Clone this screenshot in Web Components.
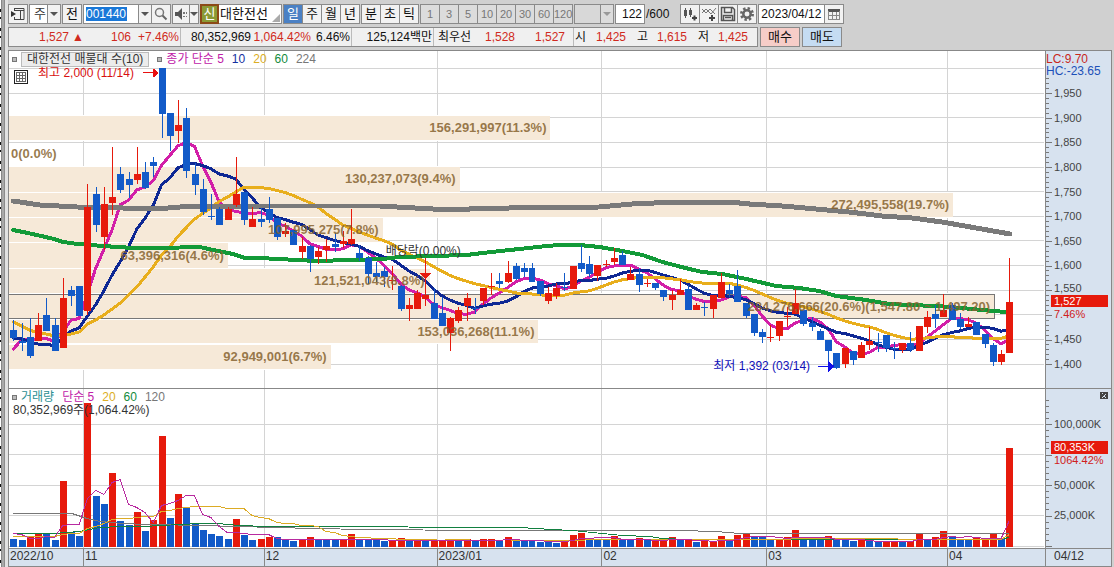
<!DOCTYPE html>
<html lang="ko">
<head>
<meta charset="utf-8">
<title>대한전선 차트</title>
<style>
html,body{margin:0;height:100%}
body{font:12px/16px "Liberation Sans","Noto Sans CJK KR",sans-serif;color:#111;background:#d0d0d0;display:flex}
hts-app{flex:1}
</style>
</head>
<body>
<hts-app></hts-app>
<script>
const define=(name,html,Base=HTMLElement)=>{
  const t=document.createElement('template');t.innerHTML=html;
  customElements.define(name,class extends Base{
    constructor(){super();this.attachShadow({mode:'open'}).append(t.content.cloneNode(true));}
  });
};

define('drop-down',`<style>
:host{display:flex;position:relative;height:20px}
::slotted(select){appearance:none;flex:1;min-width:0;height:20px;box-sizing:border-box;border:1px solid #8a8a8a;border-radius:0;margin:0;padding:0 0 0 4px;font:inherit;font-size:13px;color:#333;background:#fff}
:host([off]) ::slotted(select){background:#d8d8d8}
span{position:absolute;right:0;top:0;width:14px;height:20px;box-sizing:border-box;border:1px solid #8a8a8a;background:#f2f2f2;display:grid;place-items:center;pointer-events:none}
:host([off]) span{background:#dcdcdc;--c:#999}
i{border:4px solid transparent;border-top:4px solid var(--c,#555);border-bottom:0}
</style><slot></slot><span><i></i></span>`);

define('tool-bar',`<style>
:host{display:flex;height:20px;gap:1px}
*{box-sizing:border-box}
button,input{font:inherit;margin:0;padding:0;border:1px solid #8a8a8a;border-radius:0;height:20px;color:#111}
button{width:20px;font-size:13px;line-height:16px;background:#f2f2f2;display:grid;place-items:center;white-space:nowrap}
button svg{display:block}
.g{display:flex}
.g button+button{margin-left:-1px}
.n button{background:#dcdcdc;color:#777;font-size:11px}
.arrow{width:14px}
.arrow i{border:4px solid transparent;border-top:4px solid #555;border-bottom:0}
.codebox{width:56px;height:20px;border:1px solid #8a8a8a;background:#fff;padding:2px 2px;display:flex}
.codebox input{border:0;width:41px;height:14px;background:#1a78d8;color:#fff}
.name{width:82px;height:20px;background:#fff;border:1px solid #8a8a8a;display:flex;align-items:center;position:relative;font-size:13px}
.name b{width:19px;height:20px;margin:-1px 0 -1px -1px;border:2px solid #8c4a17;background:#8b9a35;color:#fff;font-weight:400;line-height:15px;text-align:center}
.name input{border:0;width:56px;height:16px;padding-left:1px}
.name:after{content:"";position:absolute;right:1px;bottom:1px;border:4px solid transparent;border-right-color:#aaa;border-bottom-color:#aaa}
button.on{background:#4a80c4;color:#fff}
label{display:flex;align-items:center;font-size:12px;gap:1px}
.count{width:30px;text-align:right;padding-right:2px;background:#fff}
.date{width:67px;padding-left:2px;background:#fff}
.icons{margin-left:10px}
</style>
<button aria-label="패널"><svg width="16" height="14"><path d="M4 1.5h10v11H4M4.5 1v3M4.5 10v3M4 3.5h10M10.500 4v8" fill="none" stroke="#444"/><path d="M1 4v6l5-3z" fill="#333"/></svg></button>
<drop-down style="width:32px"><select aria-label="시장"><option>주</option></select></drop-down>
<button>전</button>
<div class="g"><span class="codebox"><input value="001440" aria-label="종목코드"></span><button class="arrow" style="margin-left:-1px" aria-label="종목 목록"><i></i></button><button aria-label="검색"><svg width="14" height="14"><circle cx="5.500" cy="5.500" r="4" fill="none" stroke="#777" stroke-width="1.500"/><path d="M8.500 8.500l4 4" stroke="#666" stroke-width="2"/></svg></button></div>
<div class="g"><button style="width:18px" aria-label="소리"><svg width="14" height="12"><path d="M1 4h3l4-4v12l-4-4h-3z" fill="#555"/><path d="M9 4h2v2H9zM12 4h1v2h-1zM9 8h2v1H9zM12 8h1v1h-1z" fill="#777"/></svg></button><button class="arrow" style="width:10px" aria-label="소리 설정"><i></i></button></div>
<div class="name"><b>신</b><input value="대한전선" aria-label="종목명"></div>
<div class="g"><button class="on">일</button><button>주</button><button>월</button><button>년</button></div>
<div class="g"><button>분</button><button>초</button><button>틱</button></div>
<div class="g n"><button>1</button><button>3</button><button>5</button><button>10</button><button>20</button><button>30</button><button>60</button><button>120</button></div>
<drop-down off style="width:40px"><select aria-label="틱 간격"><option></option></select></drop-down>
<label><input class="count" value="122" aria-label="봉 개수">/600</label>
<div class="g icons">
<button aria-label="봉 추가"><svg width="16" height="16"><path d="M2 4h3v6H2zM7 4h3v5H7zM3 2h1v10H3zM8 2h1v9H8z" fill="#555"/><path d="M10 12h5M12.500 9.500v5" stroke="#444" stroke-width="2"/></svg></button>
<button aria-label="지표 추가"><svg width="16" height="16"><path d="M1 7l4-4 5 5 5-6M1 3l4 4 4-4 5 5" fill="none" stroke="#777"/><path d="M8 12h6M11 9v6" stroke="#444" stroke-width="2"/></svg></button>
<button aria-label="저장"><svg width="16" height="16"><path d="M1.500 1.500h11l2 2v11h-13zM4.500 1.500v5h7v-5M3.500 14.500v-5h9v5M5 11.500h6" fill="none" stroke="#555" stroke-width="1.500"/></svg></button>
<button aria-label="설정"><svg width="16" height="16"><circle cx="8" cy="8" r="5.500" fill="none" stroke="#666" stroke-width="3" stroke-dasharray="2.300 2"/><circle cx="8" cy="8" r="3.700" fill="none" stroke="#666" stroke-width="2.500"/></svg></button>
</div>
<div class="g"><input class="date" value="2023/04/12" aria-label="날짜"><button style="margin-left:-1px" aria-label="달력"><svg width="12" height="12" shape-rendering="crispEdges"><path d="M0 1h12v3H0z" fill="#555"/><path d="M.5 3v8h11V3M0 7.500h12M4.500 4v7M8.500 4v7" fill="none" stroke="#888"/></svg></button></div>`);

define('quote-bar',`<style>
:host{display:flex;height:20px;gap:2px}
*{box-sizing:border-box}
.q{display:flex;width:750px;border:1px solid #8a8a8a;background:#f0f0f0}
.c{display:flex;border-right:1px solid #bbb;line-height:19px;height:18px}
.c:last-child{border:0}
.c span{text-align:right;white-space:nowrap}
.r{color:#d02a20}
button{width:40px;height:20px;margin:0;padding:0;border:1px solid #8a8a8a;border-radius:0;font:inherit;font-size:13px;line-height:16px;color:#111;background:#f6cdc8}
button+button{background:#c5dcf2}
</style>
<div class="q">
<div class="c" style="width:172px"><span class="r" style="width:60px">1,527</span><span class="r" style="width:15px">▲</span><span class="r" style="width:47px">106</span><span class="r" style="width:48px">+7.46%</span></div>
<div class="c" style="width:171px"><span style="width:70px">80,352,969</span><span class="r" style="width:60px">1,064.42%</span><span style="width:39px">6.46%</span></div>
<div class="c" style="width:82px"><span style="width:80px">125,124백만</span></div>
<div class="c" style="width:140px"><span style="width:37px">최우선</span><span class="r" style="width:44px">1,528</span><span class="r" style="width:50px">1,527</span></div>
<div class="c" style="width:183px"><span style="width:12px">시</span><span class="r" style="width:40px">1,425</span><span style="width:22px">고</span><span class="r" style="width:39px">1,615</span><span style="width:22px">저</span><span class="r" style="width:39px">1,425</span></div>
</div>
<button>매수</button><button>매도</button>`);

define('chart-legend',`<style>
:host{display:flex;gap:8px;align-items:center;height:16px;font-size:12px;white-space:nowrap}
i{width:5px;height:5px;margin-right:-4px;border:1px solid #777;background:#bbb;box-sizing:border-box}
</style><i></i><slot></slot>`);

// Candle rows: colour, body top, body bottom, high, low (pane units).
const C=`B330,338,320,341 B341,343,323,351 B337,356,318,358 R325,341,313,341 B315,331,298,331 B325,351,318,351 R298,348,278,348 B290,296,286,306 B286,316,286,316 R207,311,184,315
B194,225,187,232 R204,237,187,250 R197,203,147,215 B174,190,167,193 B179,185,172,198 R174,180,147,184 B172,188,162,189 B162,166,157,177 B68,114,68,138 B113,136,113,151
R125,131,100,143 B118,171,108,178 B174,185,163,195 B189,212,179,215 B216,217,194,220 B209,225,207,225 R209,220,207,220 R194,205,157,207 B192,220,192,225 R219,227,207,227
B219,222,208,227 B209,220,197,223 B218,237,218,240 R231,234,223,237 B230,245,230,245 R246,252,237,259 B246,259,245,272 R251,257,247,264 R246,250,239,262 B244,247,233,252
R241,244,231,248 R239,244,209,245 B253,258,245,261 B258,274,256,284 B273,277,262,282 B271,277,267,287 R280,281,266,290 B286,309,285,311 R305,309,298,321 R293,309,290,309
R295,299,258,306 B303,319,288,319 B313,326,297,326 R318,333,317,351 R310,321,307,323 R298,306,293,321 B308,309,298,314 R288,301,288,305 R286,287,273,295 B281,284,273,288
R273,282,261,283 B266,279,263,280 B268,272,263,277 B268,282,263,282 B281,294,281,296 R293,301,287,304 R288,296,283,299 B287,288,273,291 R266,289,266,289 B263,269,245,272
B264,274,256,277 R265,276,265,281 R264,265,260,267 R258,262,248,265 B255,265,251,265 R274,280,267,280 B274,285,268,292 R283,284,279,287 B283,288,283,290 B290,297,290,301
R295,300,290,310 R290,295,279,295 B289,310,285,310 R305,310,303,310 B307,308,302,316 R295,309,295,318 R282,298,273,298 B290,294,284,297 B286,302,270,302 B303,316,303,318
B314,333,314,336 B332,337,329,343 R337,338,325,342 R321,336,321,341 R316,317,307,327 R303,314,289,314 B310,324,310,326 B323,327,317,331 B331,340,329,340 B340,351,340,367
B353,368,353,369 R348,364,348,368 B351,360,351,365 R345,358,342,358 R341,345,327,350 B342,343,333,352 B335,348,335,352 B348,349,342,359 R343,350,343,353 B343,350,332,352
R326,351,326,351 R317,327,311,333 B314,319,305,328 R310,317,294,317 B305,320,303,320 B319,327,313,329 R324,327,317,327 B322,335,322,335 B334,344,334,348 B345,362,343,366
R354,362,350,365 R302,353,258,353`.split(/\s+/).map(s=>({c:s[0],v:s.slice(1).split(',').map(Number)}));
// Volume bars: colour and height in thirds of a unit.
const V=`B24 B21 R30 R42 B43 B21 R198 B46 B33 R432 B153 B129 R222 B78 B66 R105 B48 R81 R333 B87 R159 B121 B73 B51 B39 B33 B24 R84 B36 B21 R24 R30 B30 B21 B18 R21 R30 B23 B21 B21 R21 R39 B23 B23 B21 B18 R21 R27 B21 R20 B20 R20 R20 R24 B18 R24 B19 R24 R24 B18 R30 B19 B19 B19 B15 B19 B13 R21 R36 R42 B27 B21 B21 R33 B21 B21 R27 B21 R21 R21 R30 B20 R21 B15 R18 R18 R33 B21 R36 R42 B30 B30 B24 R21 R30 R51 B21 B21 B21 R33 B23 B21 B18 R21 B18 B15 R19 R19 B18 R18 R39 B21 R30 R48 B33 B24 B24 R27 R23 R39 B26 R297`.split(' ').map(s=>({c:s[0],h:+s.slice(1)}));

const X=i=>4.3+8.24*i;
const avg=(vals,n,seed)=>vals.map((_,i)=>{
  const y=i<seed.length?seed[i]:vals.slice(Math.max(0,i-n+1),i+1).reduce((a,b)=>a+b,0)/n;
  return [X(i),y];
});
const pts=s=>s.split(' ').map(p=>p.split(',').map(Number)).map(([x,y])=>[x-9,y]);
const RED='#e61a0c',BLUE='#125ac8';
const MONTHS=[[75,'11'],[256,'12'],[429,'2023/01'],[594,'02'],[759,'03'],[940,'04']];

class Plot extends HTMLElement{
  constructor(){super();this.attachShadow({mode:'open'}).innerHTML=`<style>
  :host{display:block;position:relative;overflow:hidden;min-width:0;min-height:0;background:var(--bg,#fff)}
  svg{position:absolute;inset:0;width:100%;height:100%;shape-rendering:crispEdges}
  text{font:12px "Liberation Sans","Noto Sans CJK KR",sans-serif;fill:#333}
  text.ax{font-size:11px;fill:#444}
  .b{font-weight:bold;font-size:13px;fill:#86632f;fill-opacity:.85}
  </style><svg></svg><slot></slot>`;}
  connectedCallback(){this.draw();this.ro=new ResizeObserver(()=>this.draw());this.ro.observe(this);}
  disconnectedCallback(){this.ro.disconnect();}
  draw(){
    const [w,h]=this.base,kx=this.clientWidth/w||1,ky=this.clientHeight/h||1,o=this.top0;
    const x=v=>+(v*kx).toFixed(2),y=v=>+((v-o)*ky).toFixed(2);
    this.s='';
    this.rect=(a,b,c,d,f,e='')=>{this.s+=`<rect x="${x(a)}" y="${y(b)}" width="${x(c)}" height="${+(d*ky).toFixed(2)}" fill="${f}" ${e}/>`;};
    this.line=(a,b,c,d,f)=>{this.s+=`<path d="M${x(a)} ${y(b)}L${x(c)} ${y(d)}" stroke="${f}"/>`;};
    // One-pixel curves sit on pixel centres so that their flat stretches stay visible.
    this.poly=(p,f,n)=>{this.s+=`<polyline points="${p.map(q=>x(q[0])+','+(n==1?Math.round(y(q[1]))+.5:y(q[1]))).join(' ')}" fill="none" stroke="${f}" stroke-width="${n}" stroke-linejoin="round" stroke-linecap="${n==1?'butt':'round'}"/>`;};
    this.text=(a,b,t,e='')=>{this.s+=`<text x="${x(a)}" y="${y(b)}" ${e}>${t}</text>`;};
    this.mark=(a,b,d,f)=>{this.s+=`<path transform="translate(${x(a)} ${y(b)})" d="${d}" fill="${f}"/>`;};
    this.paint();
    this.shadowRoot.querySelector('svg').innerHTML=this.s;
  }
}

customElements.define('price-plot',class extends Plot{
  base=[1037,337];top0=51;
  paint(){
    for(let k=0;k<13;k++){const y=Math.round(68+k*24.64)+.5;this.line(0,y,1036,y,'#d4d4d4');}
    MONTHS.forEach(([m])=>this.line(m-.5,51,m-.5,388,'#d4d4d4'));
    [[116,24,551],[167,25,460],[193,24,954],[218,24,383],[243,25,228],[269,25,430],[294,25,995],[320,23,539],[345,24,331]]
      .forEach(([y,h,r])=>{this.rect(0,y-1,r-9,h+2,'#fff');this.rect(0,y,r-9,h,'#f6e9d8');});
    this.rect(-2,294.5,988,24,'none','stroke="#777"');
    const close=C.map(c=>c.c=='B'?c.v[1]:c.v[0]);
    this.poly(avg(close,5,[349,340,339,339]),'#d21ea8',3);
    this.poly(avg(close,10,[338,339,342,344,344,346,338,331,328]),'#0e2894',3);
    this.poly(avg(close,20,[322,326,330,333,334,336,335,334,332,324,320,315,309,303,295,287,277,267,255]),'#e8ae1c',3);
    this.poly(pts('13,230 23,232 37,235 54,239 63,242 78,244 103,246 133,248 160,248 200,247 213,250 233,254 245,258 260,258 297,260 317,261 350,260 383,259 400,257 433,256 467,255 483,253 510,250 520,249 547,246 560,245 580,245 600,247 623,251 643,255 663,262 690,269 703,272 723,274 747,279 777,286 800,288 820,291 837,296 867,300 890,304 910,305 937,306 963,308 983,310 1007,312'),'#129a38',4);
    this.poly(pts('13,201 40,205 77,207 123,208 157,209 180,207 260,206 380,206 433,209 470,209 510,208 600,207 633,204 677,202 730,202 750,204 783,206 817,209 850,212 883,216 913,218 943,222 977,228 1011,234'),'#7a7a7a',5);
    C.forEach(({c,v:[t,b,hi,lo]},i)=>{const x=Math.round(X(i)),f=c=='B'?BLUE:RED;
      this.rect(x,hi,1,lo-hi,f);this.rect(x-3,t,7,b-t,f);});
    [[547,132,'156,291,997(11.3%)'],[456,183,'130,237,073(9.4%)'],[950,209,'272,495,558(19.7%)'],[379,234,'107,995,275(7.8%)'],[224,260,'63,396,316(4.6%)'],[425,285,'121,521,043(8.8%)'],[991,311,'284,276,666(20.6%)(1,547.80 ~ 1,497.20)'],[535,336,'153,036,268(11.1%)'],[327,361,'92,949,001(6.7%)']]
      .forEach(([x,y,t])=>this.text(x-9,y,t,'class="b" text-anchor="end"'));
    this.text(2,158,'0(0.0%)','class="b"');
    this.text(29,77,'최고 2,000 (11/14)','style="fill:#d81010"');
    this.mark(134,72,'M0 0h10v-4l6 5-6 5v-5h-10z','#e81010');
    this.text(705,370,'최저 1,392 (03/14)','style="fill:#1010b8"');
    this.mark(810,366,'M0 0h10v-5l6 5-6 6v-5h-10z','#1010e8');
    this.text(377,255,'배당락(0.00%)');
    this.mark(411,273,'M0 0h12l-6 6z',RED);
  }
});

customElements.define('volume-plot',class extends Plot{
  base=[1037,159];top0=389;
  paint(){
    [424,454,485,515,546].forEach(y=>this.line(0,y+.5,1036,y+.5,'#d4d4d4'));
    MONTHS.forEach(([m])=>this.line(m-.5,389,m-.5,548,'#d4d4d4'));
    V.forEach(({c,h},i)=>this.rect(Math.round(X(i))-3,547-Math.round(h/3),7,Math.round(h/3),c=='B'?BLUE:RED));
    const top=V.map(v=>547-v.h/3);
    this.poly(pts('13,513 72,513 87,518 100,521 123,523 147,524 207,525 233,526 280,527 310,528 370,529 477,530 680,530 717,531 740,533 1010,533'),'#777',1);
    this.poly(pts('13,533 54,533 80,531 100,527 120,526 143,526 180,524 200,523 217,523 240,525 267,526 380,526 437,527 520,527 553,529 573,530 603,533 623,535 650,536 663,538 688,539 1000,539 1010,537'),'#128040',1);
    this.poly(avg(top,20,[536,536,536,536,536,536,534,533,533,528,526,523,519,518,518,517,516,516,511]),'#dcab24',1);
    this.poly(avg(top,5,[533,534,538,538]),'#b82aa0',1);
    this.text(4,414,'80,352,969주(1,064.42%)');
  }
});

customElements.define('price-axis',class extends Plot{
  base=[65,337];top0=51;
  paint(){
    for(let k=0;k<61;k++){const y=93+(k-5)*4.93;if(y>76&&y<388)this.line(0,Math.round(y)+.5,k%5?3:6,Math.round(y)+.5,'#777');}
    for(let k=0;k<12;k++){if(k==9)continue;this.text(8,(k==8?95:97)+Math.round(k*24.64),(1950-50*k).toLocaleString('en'),'class="ax"');}
    this.text(0,63,'LC:9.70','style="fill:#c8281c"');
    this.text(0,75,'HC:-23.65','style="fill:#1c50b8"');
    this.rect(5,295,57,12,RED);
    this.text(8,305,'1,527','style="fill:#fff" class="ax"');
    this.text(8,318,'7.46%','style="fill:#d02020" class="ax"');
  }
});
customElements.define('volume-axis',class extends Plot{
  base=[65,159];top0=389;
  paint(){
    for(let k=0;k<25;k++){const y=Math.round(546-k*6.1)+.5;if(y>398)this.line(0,y,k%5?3:6,y,'#777');}
    [[428,'100,000K'],[489,'50,000K'],[519,'25,000K']].forEach(([y,t])=>this.text(8,y,t,'class="ax"'));
    this.rect(5,441,57,13,RED);
    this.text(8,451,'80,353K','style="fill:#fff" class="ax"');
    this.text(8,464,'1064.42%','style="fill:#d02020" class="ax"');
    this.mark(54,392,'M0 0h8v7h-8zM2 1v1h1v1h1v1h-1v1h-1v1h1v-1h2v1h1v-1h-1v-2h1v-1h-1v1h-2v-1z','#444');
  }
});
customElements.define('time-axis',class extends Plot{
  base=[1037,17];top0=549;
  paint(){
    this.text(1,560,'2022/10');
    MONTHS.forEach(([m,t])=>{this.line(m-.5,549,m-.5,566,'#888');this.text(m+1,560,t);});
  }
});

define('stock-chart',`<style>
:host{display:grid;grid-template-columns:minmax(0,1fr) 65px;grid-template-rows:minmax(0,337fr) minmax(0,159fr) 17px;gap:1px;background:#888;border:1px solid #888;box-sizing:border-box;min-height:0}
price-axis,volume-axis,time-axis,.d{--bg:#d7e2ef}
.d{background:#d7e2ef;padding-left:8px;font-size:12px;line-height:15px;color:#333}
.legends{position:absolute;top:0;left:3px;display:flex;gap:8px}
.t{border:1px solid #bbb;background:#ececec;padding:0 5px;font-size:12px;line-height:13px;color:#333}
.tool{position:absolute;left:5px;top:19px;width:14px;height:14px;box-sizing:border-box;border:1px solid #222;background:#fff;padding:1px;margin:0;border-radius:0}
.tool svg{display:block}
</style>
<price-plot>
<div class="legends"><chart-legend><span class="t">대한전선 매물대 수(10)</span></chart-legend>
<chart-legend><span style="color:#c020a8">종가 단순 5</span><span style="color:#1430a0">10</span><span style="color:#dcae24">20</span><span style="color:#128a3c">60</span><span style="color:#777">224</span></chart-legend></div>
<button class="tool" aria-label="표"><svg width="10" height="10" shape-rendering="crispEdges"><path d="M.5.5h9v9h-9zM0 3.500h10M0 6.500h10M3.500 0v10M6.500 0v10" fill="none" stroke="#666"/></svg></button>
</price-plot><price-axis></price-axis>
<volume-plot><div class="legends"><chart-legend><span style="color:#2a8f92">거래량</span><span style="color:#c020a8">단순 5</span><span style="color:#dcae24">20</span><span style="color:#128a3c">60</span><span style="color:#777">120</span></chart-legend></div></volume-plot><volume-axis></volume-axis>
<time-axis></time-axis><div class="d">04/12</div>`);

define('hts-app',`<style>
:host{display:grid;grid-template-columns:8px minmax(0,1fr);min-height:400px}
.edge{background:linear-gradient(90deg,transparent 1px,#888 1px 2px,#a9a9a9 2px 4px,#8c8c8c 4px 5px,#e2e2e2 5px),repeating-linear-gradient(#fff 0 9px,#111 9px 12px,#fff 12px 17px,#111 17px 19px)}
main{display:grid;grid-template-rows:20px 20px minmax(0,1fr);row-gap:3px;padding:4px 2px 0 0}
tool-bar,quote-bar{overflow:hidden}
</style><div class="edge"></div><main><tool-bar></tool-bar><quote-bar></quote-bar><stock-chart></stock-chart></main>`);
</script>
</body>
</html>
